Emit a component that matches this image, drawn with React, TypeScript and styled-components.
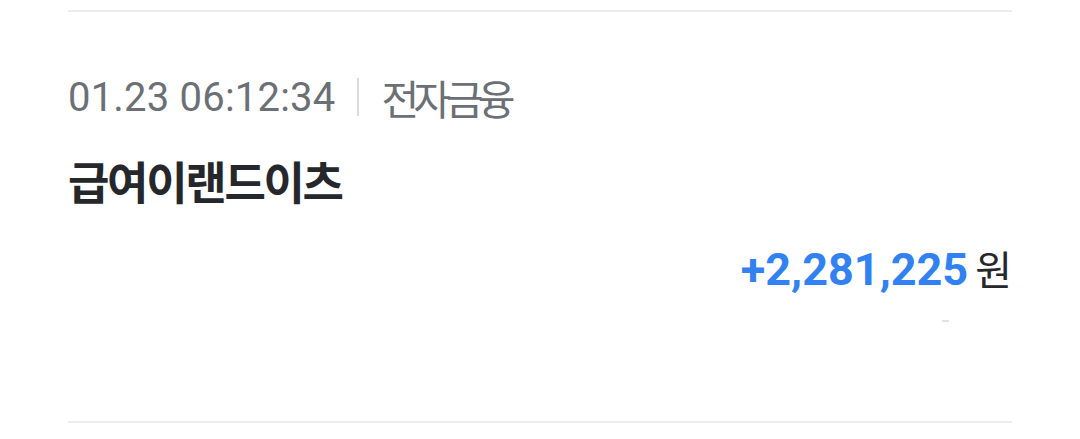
import styled, { createGlobalStyle } from "styled-components";

const GlobalStyle = createGlobalStyle`
  html, body {
    margin: 0;
    padding: 0;
    background: #ffffff;
  }
  body {
    font-family: Roboto, "Noto Sans CJK KR", sans-serif;
  }
`;

const Page = styled.div`
  width: 1080px;
  height: 439px;
  padding: 10px 68px 0;
  box-sizing: border-box;
  background: #ffffff;
`;

const Divider = styled.div<{ $gap: number }>`
  height: 2px;
  background: #ececec;
  margin-top: ${(p) => p.$gap}px;
`;

const Meta = styled.div`
  display: flex;
  align-items: center;
  height: 48px;
  margin-top: 61px;
  color: #6b6f76;
`;

const Time = styled.span`
  font-family: Roboto, sans-serif;
  font-size: 40px;
  letter-spacing: 0.2px;
`;

const Bar = styled.span`
  width: 2px;
  height: 38px;
  background: #dcdcdc;
  margin: 0 22px 0 22px;
`;

const Category = styled.span`
  font-family: "Noto Sans CJK KR", sans-serif;
  font-size: 41px;
  letter-spacing: -5.6px;
`;

const Title = styled.div`
  height: 56px;
  line-height: 56px;
  margin-top: 32px;
  font-family: "Noto Sans CJK KR", sans-serif;
  font-weight: 700;
  font-size: 45px;
  letter-spacing: -2.3px;
  color: #26272b;
`;

const AmountRow = styled.div`
  display: flex;
  justify-content: flex-end;
  align-items: baseline;
  height: 56px;
  line-height: 56px;
  margin-top: 31px;
`;

const Amount = styled.span`
  font-family: Roboto, sans-serif;
  font-weight: 700;
  font-size: 45px;
  color: #3182f0;
`;

const Unit = styled.span`
  font-family: "Noto Sans CJK KR", sans-serif;
  font-size: 40px;
  color: #26272b;
  margin-left: 7px;
`;

const Mark = styled.div`
  display: flex;
  justify-content: flex-end;
  margin-top: 24px;
  padding-right: 63px;
`;

const Dash = styled.span`
  width: 7px;
  height: 2px;
  background: #e2e2e2;
`;

export default function App() {
  return (
    <Page>
      <GlobalStyle />
      <Divider $gap={0} />
      <Meta>
        <Time>01.23 06:12:34</Time>
        <Bar />
        <Category>전자금융</Category>
      </Meta>
      <Title>급여이랜드이츠</Title>
      <AmountRow>
        <Amount>+2,281,225</Amount>
        <Unit>원</Unit>
      </AmountRow>
      <Mark>
        <Dash />
      </Mark>
      <Divider $gap={99} />
    </Page>
  );
}
